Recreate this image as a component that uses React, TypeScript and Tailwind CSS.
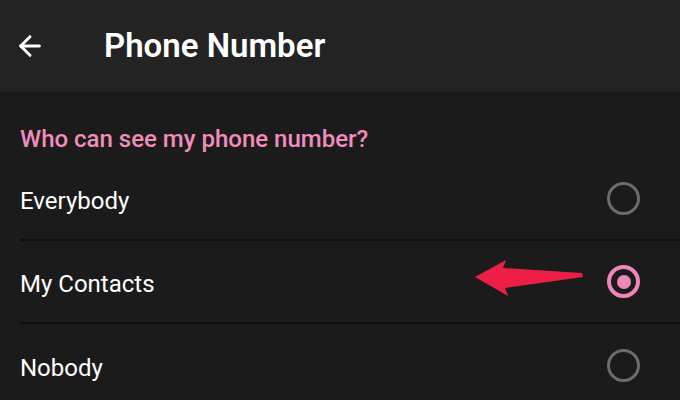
import { ArrowLeft } from "lucide-react";

const OPTIONS = ["Everybody", "My Contacts", "Nobody"];
const SELECTED = "My Contacts";

const Radio = ({ checked }: { checked: boolean }) =>
  checked ? (
    <div className="flex h-[33px] w-[33px] items-center justify-center rounded-full border-[4px] border-[#ef86ba]">
      <div className="h-[14px] w-[14px] rounded-full bg-[#ef86ba]" />
    </div>
  ) : (
    <div className="h-[33px] w-[33px] rounded-full border-[3px] border-[#6c6c6c]" />
  );

const PointerArrow = () => (
  <svg width="112" height="40" viewBox="0 0 112 40" className="absolute left-[473px] top-[258px]">
    <polygon
      points="2,19 33,2 30,10 109,15 110,19 32,30 35,38"
      fill="#ee1f47"
    />
  </svg>
);

export default function App() {
  return (
    <div className="relative h-[400px] w-[680px] overflow-hidden bg-[#1b1b1b] font-['Roboto',sans-serif]">
      <header className="flex h-[92px] items-center bg-[#242323]">
        <ArrowLeft className="ml-[14px] h-[32px] w-[32px] text-white" strokeWidth={2.2} />
        <h1 className="ml-[58px] text-[33px] font-semibold text-white">Phone Number</h1>
      </header>
      <div className="pl-[20px]">
        <p className="pt-[32px] text-[24px] font-medium leading-[30px] text-[#f08dbc]">Who can see my phone number?</p>
        <ul className="mt-[4px]">
          {OPTIONS.map((o, i) => (
            <li
              key={o}
              className={`flex h-[83px] items-center justify-between pr-[40px] ${i < OPTIONS.length - 1 ? "border-b-2 border-[#101010]" : ""}`}
            >
              <span className="pt-[4px] text-[24px] text-white">{o}</span>
              <Radio checked={o === SELECTED} />
            </li>
          ))}
        </ul>
      </div>
      <PointerArrow />
    </div>
  );
}
